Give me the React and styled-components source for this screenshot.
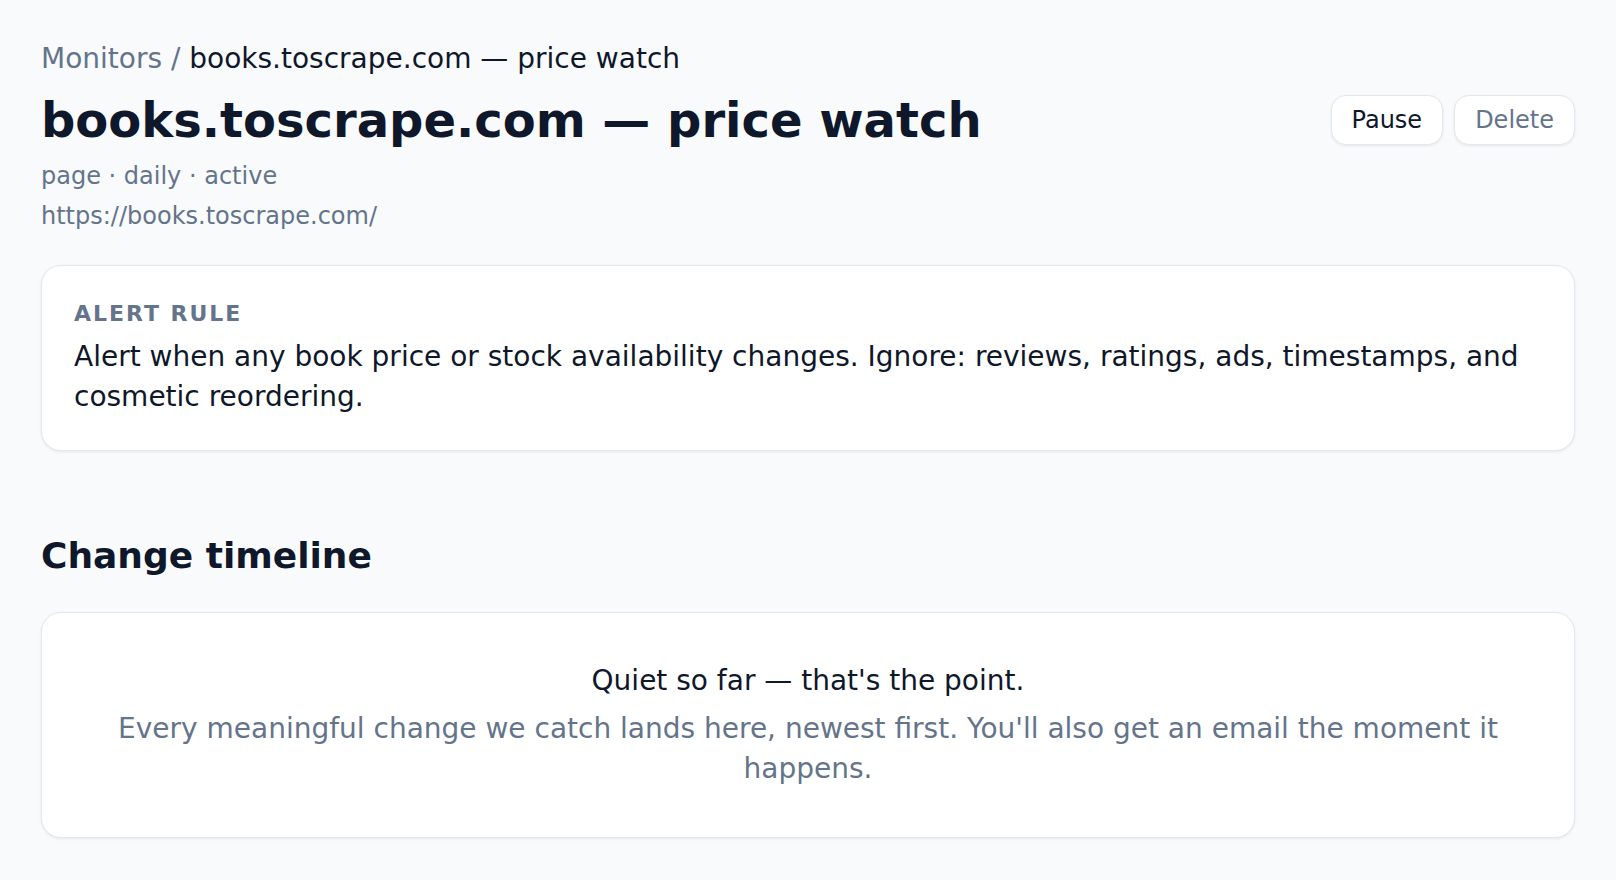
import React from 'react';
import styled, { createGlobalStyle } from 'styled-components';

const COLOR = {
  page: '#f8fafc',
  ink: '#0f172a',
  muted: '#64748b',
  border: '#e2e8f0',
  card: '#ffffff',
};

const GlobalStyle = createGlobalStyle`
  html, body {
    margin: 0;
    padding: 0;
    background: ${COLOR.page};
  }
  body {
    font-family: "DejaVu Sans", "Liberation Sans", sans-serif;
    color: ${COLOR.ink};
  }
`;

const App = () => {
  return (
    <>
      <GlobalStyle />
      <Page>
        <Header>
          <Breadcrumb>
            <Crumb>Monitors / </Crumb>books.toscrape.com — price watch
          </Breadcrumb>
          <TitleRow>
            <Title>books.toscrape.com — price watch</Title>
            <Actions>
              <Button>Pause</Button>
              <Button $muted>Delete</Button>
            </Actions>
          </TitleRow>
          <Meta>page · daily · active</Meta>
          <Meta>https://books.toscrape.com/</Meta>
        </Header>

        <Card>
          <Label>Alert rule</Label>
          <Body>
            Alert when any book price or stock availability changes. Ignore: reviews, ratings, ads, timestamps, and
            cosmetic reordering.
          </Body>
        </Card>

        <Section>
          <SectionTitle>Change timeline</SectionTitle>
          <EmptyCard>
            <Body>Quiet so far — that's the point.</Body>
            <Hint>
              Every meaningful change we catch lands here, newest first. You'll also get an email the moment it happens.
            </Hint>
          </EmptyCard>
        </Section>
      </Page>
    </>
  );
};

export default App;

const Page = styled.div`
  display: flex;
  flex-direction: column;
  row-gap: 31px;
  padding: 42px 41px;
  box-sizing: border-box;
  width: 100%;
`;

const Header = styled.div`
  display: flex;
  flex-direction: column;
`;

const Breadcrumb = styled.div`
  font-size: 28px;
  line-height: 34px;
  color: ${COLOR.ink};
`;

const Crumb = styled.span`
  color: ${COLOR.muted};
`;

const TitleRow = styled.div`
  display: flex;
  flex-direction: row;
  justify-content: space-between;
  align-items: center;
  margin-top: 15px;
  margin-bottom: 5px;
`;

const Title = styled.h1`
  margin: 0;
  font-size: 48px;
  line-height: 58px;
  font-weight: 700;
  color: ${COLOR.ink};
`;

const Actions = styled.div`
  display: flex;
  flex-direction: row;
  column-gap: 11px;
`;

const Button = styled.button`
  height: 50px;
  padding: 0 20px;
  border: 1px solid ${COLOR.border};
  border-radius: 15px;
  background: ${COLOR.card};
  box-shadow: 0 1px 3px rgba(15, 23, 42, 0.08);
  font-family: "DejaVu Sans", sans-serif;
  font-size: 24px;
  color: ${(p) => (p.$muted ? COLOR.muted : COLOR.ink)};
  cursor: pointer;
`;

const Meta = styled.div`
  font-size: 24px;
  line-height: 36px;
  color: ${COLOR.muted};
  margin-top: 4px;

  &:first-of-type {
    margin-top: 0;
  }
`;

const Card = styled.div`
  display: flex;
  flex-direction: column;
  row-gap: 7px;
  padding: 32px 32px 33px;
  background: ${COLOR.card};
  border: 1px solid ${COLOR.border};
  border-radius: 20px;
  box-shadow: 0 1px 3px rgba(15, 23, 42, 0.08);
`;

const Label = styled.div`
  font-size: 22px;
  line-height: 32px;
  font-weight: 700;
  letter-spacing: 0.09em;
  text-transform: uppercase;
  color: ${COLOR.muted};
`;

const Body = styled.div`
  font-size: 28px;
  line-height: 40px;
  color: ${COLOR.ink};
`;

const Section = styled.div`
  display: flex;
  flex-direction: column;
  row-gap: 32px;
  margin-top: 50px;
`;

const SectionTitle = styled.h2`
  margin: 0;
  font-size: 36px;
  line-height: 48px;
  font-weight: 700;
  color: ${COLOR.ink};
`;

const EmptyCard = styled(Card)`
  row-gap: 8px;
  padding: 48px 48px 48px;
  align-items: center;
  text-align: center;
`;

const Hint = styled.div`
  font-size: 28px;
  line-height: 40px;
  color: ${COLOR.muted};
`;
